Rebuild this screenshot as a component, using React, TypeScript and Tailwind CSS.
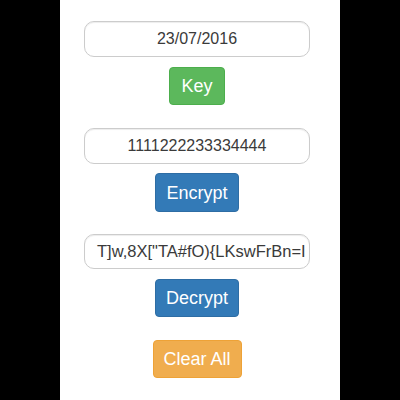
import React from "react";

const font = { fontFamily: '"Liberation Sans", Arial, Helvetica, sans-serif' };

function Field({ value, className = "" }: { value: string; className?: string }) {
  return (
    <div
      className={`w-[226px] rounded-[10px] border border-[#cccccc] bg-white shadow-[inset_0_1px_1px_rgba(0,0,0,0.075)] text-[#3a3a3a] flex items-center overflow-hidden whitespace-nowrap ${className}`}
    >
      {value}
    </div>
  );
}

function Btn({ label, className }: { label: string; className: string }) {
  return (
    <button
      type="button"
      className={`rounded-[4px] border text-white text-[18px] leading-none flex items-center justify-center ${className}`}
      style={font}
    >
      {label}
    </button>
  );
}

export default function App() {
  return (
    <div className="w-[400px] h-[400px] bg-black flex justify-center" style={font}>
      <div className="w-[280px] h-full bg-white">
        <div className="mr-[6px] flex flex-col items-center pt-[21px]">
          <Field value="23/07/2016" className="h-[36px] justify-center text-[16px]" />
          <Btn label="Key" className="mt-[10px] w-[56px] h-[38px] bg-[#5cb85c] border-[#4cae4c]" />
          <Field value="1111222233334444" className="mt-[23px] h-[36px] justify-center text-[16px]" />
          <Btn label="Encrypt" className="mt-[9px] w-[84px] h-[39px] bg-[#337ab7] border-[#2e6da4]" />
          <Field value={'T]w,8X["TA#fO){LKswFrBn=I'} className="mt-[22px] h-[35px] pl-[12px] text-[16.5px]" />
          <Btn label="Decrypt" className="mt-[10px] w-[84px] h-[38px] bg-[#337ab7] border-[#2e6da4]" />
          <Btn label="Clear All" className="mt-[23px] w-[89px] h-[38px] bg-[#f0ad4e] border-[#eea236]" />
        </div>
      </div>
    </div>
  );
}
